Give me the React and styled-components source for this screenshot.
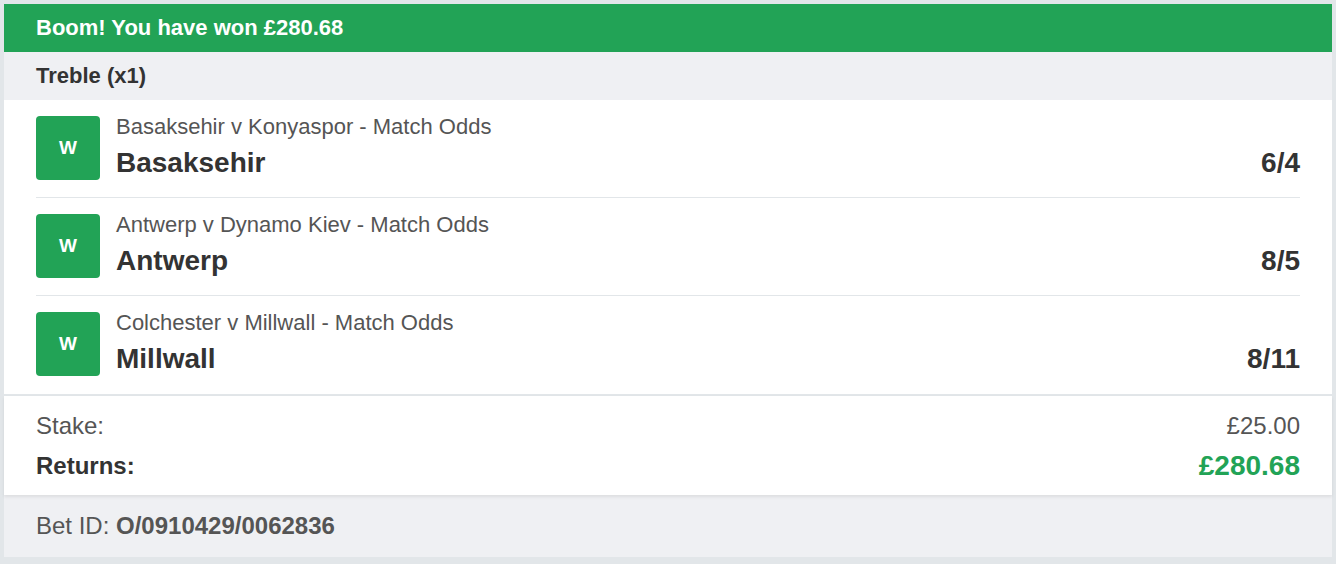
import React from 'react'
import styled, { createGlobalStyle } from 'styled-components'

const COLORS = {
    green: '#22a356',
    page: '#e2e6e9',
    band: '#eff0f3',
    line: '#e2e6e9',
    dark: '#333333',
    grey: '#555555',
}

const GlobalStyle = createGlobalStyle`
    html, body {
        margin: 0;
        padding: 0;
        background: ${COLORS.page};
        font-family: "Liberation Sans", Arial, Helvetica, sans-serif;
    }
`

const selections = [
    { market: 'Basaksehir v Konyaspor - Match Odds', name: 'Basaksehir', odds: '6/4' },
    { market: 'Antwerp v Dynamo Kiev - Match Odds', name: 'Antwerp', odds: '8/5' },
    { market: 'Colchester v Millwall - Match Odds', name: 'Millwall', odds: '8/11' },
]

const App = () => {
    return (
        <Page>
            <GlobalStyle />
            <Card>
                <WinBanner>Boom! You have won £280.68</WinBanner>
                <BetType>Treble (x1)</BetType>
                <SelectionList>
                    {selections.map((sel, i) => (
                        <Selection key={i}>
                            <ResultBadge>W</ResultBadge>
                            <SelectionText>
                                <Market>{sel.market}</Market>
                                <NameRow>
                                    <Name>{sel.name}</Name>
                                    <Odds>{sel.odds}</Odds>
                                </NameRow>
                            </SelectionText>
                        </Selection>
                    ))}
                </SelectionList>
                <Totals>
                    <TotalRow>
                        <span>Stake:</span>
                        <span>£25.00</span>
                    </TotalRow>
                    <TotalRow bold>
                        <span>Returns:</span>
                        <Returns>£280.68</Returns>
                    </TotalRow>
                </Totals>
                <BetId>
                    Bet ID: <strong>O/0910429/0062836</strong>
                </BetId>
            </Card>
        </Page>
    )
}

const Page = styled.div`
    padding: 4px;
    min-height: 100vh;
    box-sizing: border-box;
`
const Card = styled.section`
    background: #fff;
`
const WinBanner = styled.div`
    height: 48px;
    display: flex;
    align-items: center;
    padding: 0 32px;
    background: ${COLORS.green};
    color: #fff;
    font-size: 22px;
    font-weight: 700;
`
const BetType = styled.div`
    height: 48px;
    display: flex;
    align-items: center;
    padding: 0 32px;
    background: ${COLORS.band};
    color: ${COLORS.dark};
    font-size: 22px;
    font-weight: 700;
`
const SelectionList = styled.div`
    border-bottom: 2px solid ${COLORS.line};
`
const Selection = styled.div`
    display: flex;
    align-items: flex-start;
    gap: 16px;
    margin: 0 32px;
    padding: 16px 0 17px;
    border-bottom: 1px solid ${COLORS.line};

    &:last-child {
        border-bottom: none;
        padding-bottom: 18px;
    }
`
const ResultBadge = styled.div`
    flex: none;
    width: 64px;
    height: 64px;
    border-radius: 4px;
    background: ${COLORS.green};
    color: #fff;
    font-size: 19px;
    font-weight: 700;
    display: flex;
    align-items: center;
    justify-content: center;
`
const SelectionText = styled.div`
    flex: 1;
    height: 64px;
    display: flex;
    flex-direction: column;
`
const Market = styled.div`
    font-size: 22px;
    color: ${COLORS.grey};
    line-height: 22px;
`
const NameRow = styled.div`
    display: flex;
    justify-content: space-between;
    align-items: baseline;
    margin-top: 8px;
    line-height: 34px;
`
const Name = styled.div`
    font-size: 28px;
    font-weight: 700;
    color: ${COLORS.dark};
`
const Odds = styled.div`
    font-size: 28px;
    font-weight: 700;
    color: ${COLORS.dark};
`
const Totals = styled.div`
    padding: 10px 32px 9px;
    box-shadow: 0 2px 3px rgba(0, 0, 0, 0.08);
    position: relative;
`
const TotalRow = styled.div`
    display: flex;
    justify-content: space-between;
    align-items: center;
    height: 40px;
    font-size: 24px;
    font-weight: ${p => (p.bold ? 700 : 400)};
    color: ${p => (p.bold ? COLORS.dark : COLORS.grey)};
`
const Returns = styled.span`
    color: ${COLORS.green};
    font-size: 28px;
`
const BetId = styled.div`
    height: 62px;
    display: flex;
    align-items: center;
    padding: 0 32px;
    background: ${COLORS.band};
    color: ${COLORS.grey};
    font-size: 24px;
    white-space: pre;
`

export default App
